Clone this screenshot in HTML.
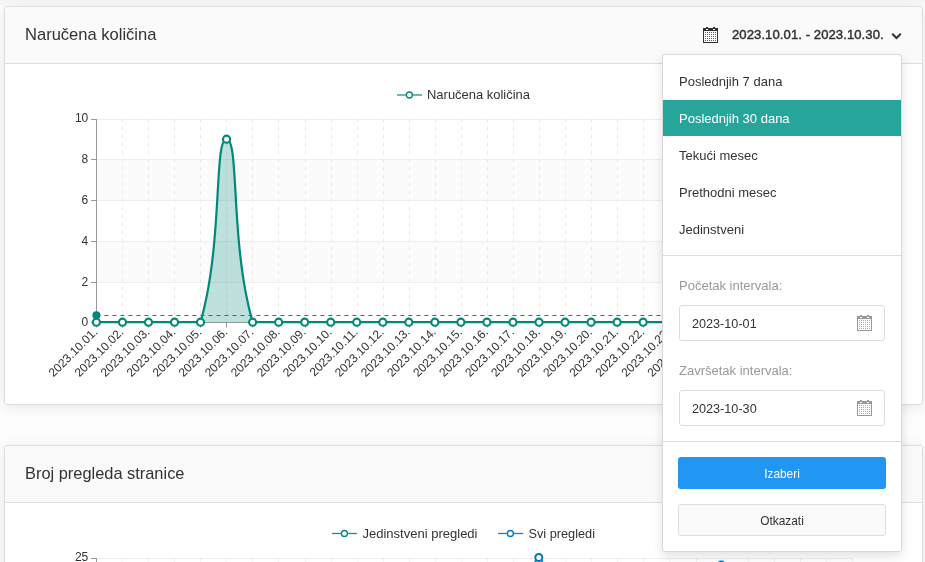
<!DOCTYPE html>
<html>
<head>
<meta charset="utf-8">
<style>
*{box-sizing:border-box;}
html,body{margin:0;padding:0;}
body{width:925px;height:562px;overflow:hidden;background:#fdfdfd;font-family:"Liberation Sans",sans-serif;font-size:13px;color:#333;position:relative;}
.card{position:absolute;left:4px;width:919px;background:#fff;border:1px solid #dddddd;border-radius:3px;box-shadow:0 2px 14px rgba(0,0,0,.09);}
.card-h{position:absolute;left:0;top:0;right:0;height:57px;background:#fafafa;border-bottom:1px solid #dddddd;border-radius:2px 2px 0 0;}
.title{position:absolute;left:20px;top:18px;font-size:16.55px;line-height:20px;color:#333;white-space:nowrap;}
#c1{top:6px;height:399px;}
#c2{top:445px;height:140px;}
svg text{font-family:"Liberation Sans",sans-serif;}
#wrap{position:absolute;left:0;top:0;width:925px;height:562px;will-change:transform;}
.chart{position:absolute;left:0;top:0;pointer-events:none;}
.dd{position:absolute;left:662px;top:54px;width:240px;height:498px;background:#fff;border:1px solid #d9d9d9;border-radius:3px;box-shadow:0 4px 11px rgba(0,0,0,.12);}
.dd > *{margin-top:1px;}
.it{position:absolute;left:0;right:0;height:36px;line-height:38px;padding-left:16px;font-size:13px;color:#333;white-space:nowrap;}
.it.act{background:#26a69a;color:#fff;}
.hr{position:absolute;left:0;right:0;height:1px;background:#dddddd;}
.lbl{position:absolute;left:16px;font-size:13px;color:#999;line-height:20px;white-space:nowrap;}
.inp{position:absolute;left:16px;width:206px;height:36px;border:1px solid #dddddd;border-radius:3px;background:#fff;line-height:36px;padding-left:12px;font-size:12.65px;color:#333;}
.inp .cal{position:absolute;left:177px;top:9px;}
.btn{position:absolute;left:15px;width:208px;height:32px;border-radius:3px;text-align:center;line-height:34px;font-size:11.9px;}
.b1{background:#2196f3;color:#fff;}
.b2{background:#fafafa;border:1px solid #dddddd;color:#333;line-height:32px;}
.range{position:absolute;left:732px;top:27px;font-size:13.1px;font-weight:normal;-webkit-text-stroke:0.45px #333;letter-spacing:0.07px;color:#333;line-height:16px;white-space:nowrap;}
.hcal{position:absolute;left:703px;top:27px;width:16px;height:16px;}
.chev{position:absolute;left:890px;top:31px;}
</style>
</head>
<body>
<div id="wrap">
<div style="position:absolute;left:0;top:0;width:925px;height:8px;background:linear-gradient(rgba(0,0,0,.035),rgba(0,0,0,0));"></div>

<div class="card" id="c1">
  <div class="card-h"><div class="title">Naručena količina</div></div>
</div>
<div class="card" id="c2">
  <div class="card-h"><div class="title" style="font-size:16.4px;top:17px">Broj pregleda stranice</div></div>
</div>

<svg class="chart" width="925" height="562" viewBox="0 0 925 562">
<rect x="96.40" y="159.5" width="755.01" height="41.0" fill="#fbfbfb"/>
<rect x="96.40" y="241.5" width="755.01" height="41.0" fill="#fbfbfb"/>
<line x1="96.40" x2="851.41" y1="119.5" y2="119.5" stroke="#eeeeee" stroke-width="1"/>
<line x1="96.40" x2="851.41" y1="159.5" y2="159.5" stroke="#eeeeee" stroke-width="1"/>
<line x1="96.40" x2="851.41" y1="200.5" y2="200.5" stroke="#eeeeee" stroke-width="1"/>
<line x1="96.40" x2="851.41" y1="241.5" y2="241.5" stroke="#eeeeee" stroke-width="1"/>
<line x1="96.40" x2="851.41" y1="282.5" y2="282.5" stroke="#eeeeee" stroke-width="1"/>
<line x1="122.50" x2="122.50" y1="119.5" y2="322.5" stroke="#ebebeb" stroke-width="1" stroke-dasharray="4 4" stroke-dashoffset="0.6"/>
<line x1="148.50" x2="148.50" y1="119.5" y2="322.5" stroke="#ebebeb" stroke-width="1" stroke-dasharray="4 4" stroke-dashoffset="0.6"/>
<line x1="174.50" x2="174.50" y1="119.5" y2="322.5" stroke="#ebebeb" stroke-width="1" stroke-dasharray="4 4" stroke-dashoffset="0.6"/>
<line x1="200.50" x2="200.50" y1="119.5" y2="322.5" stroke="#ebebeb" stroke-width="1" stroke-dasharray="4 4" stroke-dashoffset="0.6"/>
<line x1="226.50" x2="226.50" y1="119.5" y2="322.5" stroke="#ebebeb" stroke-width="1" stroke-dasharray="4 4" stroke-dashoffset="0.6"/>
<line x1="252.50" x2="252.50" y1="119.5" y2="322.5" stroke="#ebebeb" stroke-width="1" stroke-dasharray="4 4" stroke-dashoffset="0.6"/>
<line x1="278.50" x2="278.50" y1="119.5" y2="322.5" stroke="#ebebeb" stroke-width="1" stroke-dasharray="4 4" stroke-dashoffset="0.6"/>
<line x1="305.50" x2="305.50" y1="119.5" y2="322.5" stroke="#ebebeb" stroke-width="1" stroke-dasharray="4 4" stroke-dashoffset="0.6"/>
<line x1="331.50" x2="331.50" y1="119.5" y2="322.5" stroke="#ebebeb" stroke-width="1" stroke-dasharray="4 4" stroke-dashoffset="0.6"/>
<line x1="357.50" x2="357.50" y1="119.5" y2="322.5" stroke="#ebebeb" stroke-width="1" stroke-dasharray="4 4" stroke-dashoffset="0.6"/>
<line x1="383.50" x2="383.50" y1="119.5" y2="322.5" stroke="#ebebeb" stroke-width="1" stroke-dasharray="4 4" stroke-dashoffset="0.6"/>
<line x1="409.50" x2="409.50" y1="119.5" y2="322.5" stroke="#ebebeb" stroke-width="1" stroke-dasharray="4 4" stroke-dashoffset="0.6"/>
<line x1="435.50" x2="435.50" y1="119.5" y2="322.5" stroke="#ebebeb" stroke-width="1" stroke-dasharray="4 4" stroke-dashoffset="0.6"/>
<line x1="461.50" x2="461.50" y1="119.5" y2="322.5" stroke="#ebebeb" stroke-width="1" stroke-dasharray="4 4" stroke-dashoffset="0.6"/>
<line x1="487.50" x2="487.50" y1="119.5" y2="322.5" stroke="#ebebeb" stroke-width="1" stroke-dasharray="4 4" stroke-dashoffset="0.6"/>
<line x1="513.50" x2="513.50" y1="119.5" y2="322.5" stroke="#ebebeb" stroke-width="1" stroke-dasharray="4 4" stroke-dashoffset="0.6"/>
<line x1="539.50" x2="539.50" y1="119.5" y2="322.5" stroke="#ebebeb" stroke-width="1" stroke-dasharray="4 4" stroke-dashoffset="0.6"/>
<line x1="565.50" x2="565.50" y1="119.5" y2="322.5" stroke="#ebebeb" stroke-width="1" stroke-dasharray="4 4" stroke-dashoffset="0.6"/>
<line x1="591.50" x2="591.50" y1="119.5" y2="322.5" stroke="#ebebeb" stroke-width="1" stroke-dasharray="4 4" stroke-dashoffset="0.6"/>
<line x1="617.50" x2="617.50" y1="119.5" y2="322.5" stroke="#ebebeb" stroke-width="1" stroke-dasharray="4 4" stroke-dashoffset="0.6"/>
<line x1="643.50" x2="643.50" y1="119.5" y2="322.5" stroke="#ebebeb" stroke-width="1" stroke-dasharray="4 4" stroke-dashoffset="0.6"/>
<line x1="669.50" x2="669.50" y1="119.5" y2="322.5" stroke="#ebebeb" stroke-width="1" stroke-dasharray="4 4" stroke-dashoffset="0.6"/>
<line x1="696.50" x2="696.50" y1="119.5" y2="322.5" stroke="#ebebeb" stroke-width="1" stroke-dasharray="4 4" stroke-dashoffset="0.6"/>
<line x1="722.50" x2="722.50" y1="119.5" y2="322.5" stroke="#ebebeb" stroke-width="1" stroke-dasharray="4 4" stroke-dashoffset="0.6"/>
<line x1="748.50" x2="748.50" y1="119.5" y2="322.5" stroke="#ebebeb" stroke-width="1" stroke-dasharray="4 4" stroke-dashoffset="0.6"/>
<line x1="774.50" x2="774.50" y1="119.5" y2="322.5" stroke="#ebebeb" stroke-width="1" stroke-dasharray="4 4" stroke-dashoffset="0.6"/>
<line x1="800.50" x2="800.50" y1="119.5" y2="322.5" stroke="#ebebeb" stroke-width="1" stroke-dasharray="4 4" stroke-dashoffset="0.6"/>
<line x1="826.50" x2="826.50" y1="119.5" y2="322.5" stroke="#ebebeb" stroke-width="1" stroke-dasharray="4 4" stroke-dashoffset="0.6"/>
<line x1="852.50" x2="852.50" y1="119.5" y2="322.5" stroke="#ebebeb" stroke-width="1" stroke-dasharray="4 4" stroke-dashoffset="0.6"/>
<line x1="96.50" x2="96.50" y1="119" y2="323" stroke="#999" stroke-width="1"/>
<line x1="91.00" x2="96.00" y1="119.5" y2="119.5" stroke="#999" stroke-width="1"/>
<text x="88.30" y="118.3" text-anchor="end" font-size="12" fill="#333" dy="3.8">10</text>
<line x1="91.00" x2="96.00" y1="159.5" y2="159.5" stroke="#999" stroke-width="1"/>
<text x="88.30" y="158.9" text-anchor="end" font-size="12" fill="#333" dy="3.8">8</text>
<line x1="91.00" x2="96.00" y1="200.5" y2="200.5" stroke="#999" stroke-width="1"/>
<text x="88.30" y="199.9" text-anchor="end" font-size="12" fill="#333" dy="3.8">6</text>
<line x1="91.00" x2="96.00" y1="241.5" y2="241.5" stroke="#999" stroke-width="1"/>
<text x="88.30" y="240.9" text-anchor="end" font-size="12" fill="#333" dy="3.8">4</text>
<line x1="91.00" x2="96.00" y1="282.5" y2="282.5" stroke="#999" stroke-width="1"/>
<text x="88.30" y="281.9" text-anchor="end" font-size="12" fill="#333" dy="3.8">2</text>
<line x1="91.00" x2="96.00" y1="322.5" y2="322.5" stroke="#999" stroke-width="1"/>
<text x="88.30" y="321.9" text-anchor="end" font-size="12" fill="#333" dy="3.8">0</text>
<line x1="96.40" x2="851.41" y1="322.5" y2="322.5" stroke="#999" stroke-width="1"/>
<line x1="96.50" x2="96.50" y1="322.5" y2="327.5" stroke="#999" stroke-width="1"/>
<line x1="122.50" x2="122.50" y1="322.5" y2="327.5" stroke="#999" stroke-width="1"/>
<line x1="148.50" x2="148.50" y1="322.5" y2="327.5" stroke="#999" stroke-width="1"/>
<line x1="174.50" x2="174.50" y1="322.5" y2="327.5" stroke="#999" stroke-width="1"/>
<line x1="200.50" x2="200.50" y1="322.5" y2="327.5" stroke="#999" stroke-width="1"/>
<line x1="226.50" x2="226.50" y1="322.5" y2="327.5" stroke="#999" stroke-width="1"/>
<line x1="252.50" x2="252.50" y1="322.5" y2="327.5" stroke="#999" stroke-width="1"/>
<line x1="278.50" x2="278.50" y1="322.5" y2="327.5" stroke="#999" stroke-width="1"/>
<line x1="305.50" x2="305.50" y1="322.5" y2="327.5" stroke="#999" stroke-width="1"/>
<line x1="331.50" x2="331.50" y1="322.5" y2="327.5" stroke="#999" stroke-width="1"/>
<line x1="357.50" x2="357.50" y1="322.5" y2="327.5" stroke="#999" stroke-width="1"/>
<line x1="383.50" x2="383.50" y1="322.5" y2="327.5" stroke="#999" stroke-width="1"/>
<line x1="409.50" x2="409.50" y1="322.5" y2="327.5" stroke="#999" stroke-width="1"/>
<line x1="435.50" x2="435.50" y1="322.5" y2="327.5" stroke="#999" stroke-width="1"/>
<line x1="461.50" x2="461.50" y1="322.5" y2="327.5" stroke="#999" stroke-width="1"/>
<line x1="487.50" x2="487.50" y1="322.5" y2="327.5" stroke="#999" stroke-width="1"/>
<line x1="513.50" x2="513.50" y1="322.5" y2="327.5" stroke="#999" stroke-width="1"/>
<line x1="539.50" x2="539.50" y1="322.5" y2="327.5" stroke="#999" stroke-width="1"/>
<line x1="565.50" x2="565.50" y1="322.5" y2="327.5" stroke="#999" stroke-width="1"/>
<line x1="591.50" x2="591.50" y1="322.5" y2="327.5" stroke="#999" stroke-width="1"/>
<line x1="617.50" x2="617.50" y1="322.5" y2="327.5" stroke="#999" stroke-width="1"/>
<line x1="643.50" x2="643.50" y1="322.5" y2="327.5" stroke="#999" stroke-width="1"/>
<line x1="669.50" x2="669.50" y1="322.5" y2="327.5" stroke="#999" stroke-width="1"/>
<line x1="696.50" x2="696.50" y1="322.5" y2="327.5" stroke="#999" stroke-width="1"/>
<line x1="722.50" x2="722.50" y1="322.5" y2="327.5" stroke="#999" stroke-width="1"/>
<line x1="748.50" x2="748.50" y1="322.5" y2="327.5" stroke="#999" stroke-width="1"/>
<line x1="774.50" x2="774.50" y1="322.5" y2="327.5" stroke="#999" stroke-width="1"/>
<line x1="800.50" x2="800.50" y1="322.5" y2="327.5" stroke="#999" stroke-width="1"/>
<line x1="826.50" x2="826.50" y1="322.5" y2="327.5" stroke="#999" stroke-width="1"/>
<line x1="852.50" x2="852.50" y1="322.5" y2="327.5" stroke="#999" stroke-width="1"/>
<text transform="translate(95.30 329.8) rotate(-45)" text-anchor="end" font-size="12" fill="#333" dy="4.2">2023.10.01.</text>
<text transform="translate(121.34 329.8) rotate(-45)" text-anchor="end" font-size="12" fill="#333" dy="4.2">2023.10.02.</text>
<text transform="translate(147.37 329.8) rotate(-45)" text-anchor="end" font-size="12" fill="#333" dy="4.2">2023.10.03.</text>
<text transform="translate(173.41 329.8) rotate(-45)" text-anchor="end" font-size="12" fill="#333" dy="4.2">2023.10.04.</text>
<text transform="translate(199.44 329.8) rotate(-45)" text-anchor="end" font-size="12" fill="#333" dy="4.2">2023.10.05.</text>
<text transform="translate(225.48 329.8) rotate(-45)" text-anchor="end" font-size="12" fill="#333" dy="4.2">2023.10.06.</text>
<text transform="translate(251.51 329.8) rotate(-45)" text-anchor="end" font-size="12" fill="#333" dy="4.2">2023.10.07.</text>
<text transform="translate(277.54 329.8) rotate(-45)" text-anchor="end" font-size="12" fill="#333" dy="4.2">2023.10.08.</text>
<text transform="translate(303.58 329.8) rotate(-45)" text-anchor="end" font-size="12" fill="#333" dy="4.2">2023.10.09.</text>
<text transform="translate(329.62 329.8) rotate(-45)" text-anchor="end" font-size="12" fill="#333" dy="4.2">2023.10.10.</text>
<text transform="translate(355.65 329.8) rotate(-45)" text-anchor="end" font-size="12" fill="#333" dy="4.2">2023.10.11.</text>
<text transform="translate(381.68 329.8) rotate(-45)" text-anchor="end" font-size="12" fill="#333" dy="4.2">2023.10.12.</text>
<text transform="translate(407.72 329.8) rotate(-45)" text-anchor="end" font-size="12" fill="#333" dy="4.2">2023.10.13.</text>
<text transform="translate(433.75 329.8) rotate(-45)" text-anchor="end" font-size="12" fill="#333" dy="4.2">2023.10.14.</text>
<text transform="translate(459.79 329.8) rotate(-45)" text-anchor="end" font-size="12" fill="#333" dy="4.2">2023.10.15.</text>
<text transform="translate(485.82 329.8) rotate(-45)" text-anchor="end" font-size="12" fill="#333" dy="4.2">2023.10.16.</text>
<text transform="translate(511.86 329.8) rotate(-45)" text-anchor="end" font-size="12" fill="#333" dy="4.2">2023.10.17.</text>
<text transform="translate(537.89 329.8) rotate(-45)" text-anchor="end" font-size="12" fill="#333" dy="4.2">2023.10.18.</text>
<text transform="translate(563.93 329.8) rotate(-45)" text-anchor="end" font-size="12" fill="#333" dy="4.2">2023.10.19.</text>
<text transform="translate(589.97 329.8) rotate(-45)" text-anchor="end" font-size="12" fill="#333" dy="4.2">2023.10.20.</text>
<text transform="translate(616.00 329.8) rotate(-45)" text-anchor="end" font-size="12" fill="#333" dy="4.2">2023.10.21.</text>
<text transform="translate(642.03 329.8) rotate(-45)" text-anchor="end" font-size="12" fill="#333" dy="4.2">2023.10.22.</text>
<text transform="translate(668.07 329.8) rotate(-45)" text-anchor="end" font-size="12" fill="#333" dy="4.2">2023.10.23.</text>
<text transform="translate(694.10 329.8) rotate(-45)" text-anchor="end" font-size="12" fill="#333" dy="4.2">2023.10.24.</text>
<text transform="translate(720.14 329.8) rotate(-45)" text-anchor="end" font-size="12" fill="#333" dy="4.2">2023.10.25.</text>
<text transform="translate(746.17 329.8) rotate(-45)" text-anchor="end" font-size="12" fill="#333" dy="4.2">2023.10.26.</text>
<text transform="translate(772.21 329.8) rotate(-45)" text-anchor="end" font-size="12" fill="#333" dy="4.2">2023.10.27.</text>
<text transform="translate(798.25 329.8) rotate(-45)" text-anchor="end" font-size="12" fill="#333" dy="4.2">2023.10.28.</text>
<text transform="translate(824.28 329.8) rotate(-45)" text-anchor="end" font-size="12" fill="#333" dy="4.2">2023.10.29.</text>
<text transform="translate(850.31 329.8) rotate(-45)" text-anchor="end" font-size="12" fill="#333" dy="4.2">2023.10.30.</text>
<path d="M96.40 322.20 C96.40 322.20 109.42 322.20 122.44 322.20 C135.45 322.20 135.45 322.20 148.47 322.20 C161.49 322.20 161.49 322.20 174.50 322.20 C187.52 322.20 197.33 322.20 200.54 322.20 C223.36 242.00 213.56 139.20 226.58 139.20 C239.59 139.20 229.79 242.00 252.61 322.20 C255.82 322.20 265.63 322.20 278.64 322.20 C291.66 322.20 291.66 322.20 304.68 322.20 C317.70 322.20 317.70 322.20 330.72 322.20 C343.73 322.20 343.73 322.20 356.75 322.20 C369.77 322.20 369.77 322.20 382.78 322.20 C395.80 322.20 395.80 322.20 408.82 322.20 C421.84 322.20 421.84 322.20 434.86 322.20 C447.87 322.20 447.87 322.20 460.89 322.20 C473.91 322.20 473.91 322.20 486.92 322.20 C499.94 322.20 499.94 322.20 512.96 322.20 C525.98 322.20 525.98 322.20 539.00 322.20 C552.01 322.20 552.01 322.20 565.03 322.20 C578.05 322.20 578.05 322.20 591.07 322.20 C604.08 322.20 604.08 322.20 617.10 322.20 C630.12 322.20 630.12 322.20 643.13 322.20 C656.15 322.20 656.15 322.20 669.17 322.20 C682.19 322.20 682.19 322.20 695.20 322.20 C708.22 322.20 708.22 322.20 721.24 322.20 C734.26 322.20 734.26 322.20 747.27 322.20 C760.29 322.20 760.29 322.20 773.31 322.20 C786.33 322.20 786.33 322.20 799.35 322.20 C812.36 322.20 812.36 322.20 825.38 322.20 C838.40 322.20 851.41 322.20 851.41 322.20 L851.41 322.2 L96.40 322.2 Z" fill="#00897b" fill-opacity="0.25"/>
<path d="M96.40 322.20 C96.40 322.20 109.42 322.20 122.44 322.20 C135.45 322.20 135.45 322.20 148.47 322.20 C161.49 322.20 161.49 322.20 174.50 322.20 C187.52 322.20 197.33 322.20 200.54 322.20 C223.36 242.00 213.56 139.20 226.58 139.20 C239.59 139.20 229.79 242.00 252.61 322.20 C255.82 322.20 265.63 322.20 278.64 322.20 C291.66 322.20 291.66 322.20 304.68 322.20 C317.70 322.20 317.70 322.20 330.72 322.20 C343.73 322.20 343.73 322.20 356.75 322.20 C369.77 322.20 369.77 322.20 382.78 322.20 C395.80 322.20 395.80 322.20 408.82 322.20 C421.84 322.20 421.84 322.20 434.86 322.20 C447.87 322.20 447.87 322.20 460.89 322.20 C473.91 322.20 473.91 322.20 486.92 322.20 C499.94 322.20 499.94 322.20 512.96 322.20 C525.98 322.20 525.98 322.20 539.00 322.20 C552.01 322.20 552.01 322.20 565.03 322.20 C578.05 322.20 578.05 322.20 591.07 322.20 C604.08 322.20 604.08 322.20 617.10 322.20 C630.12 322.20 630.12 322.20 643.13 322.20 C656.15 322.20 656.15 322.20 669.17 322.20 C682.19 322.20 682.19 322.20 695.20 322.20 C708.22 322.20 708.22 322.20 721.24 322.20 C734.26 322.20 734.26 322.20 747.27 322.20 C760.29 322.20 760.29 322.20 773.31 322.20 C786.33 322.20 786.33 322.20 799.35 322.20 C812.36 322.20 812.36 322.20 825.38 322.20 C838.40 322.20 851.41 322.20 851.41 322.20" fill="none" stroke="#00897b" stroke-width="2.2" stroke-linejoin="round"/>
<line x1="96.40" x2="851.41" y1="315.5" y2="315.5" stroke="#00897b" stroke-width="1.2" stroke-dasharray="4 4"/>
<circle cx="96.40" cy="315.2" r="4" fill="#00897b"/>
<circle cx="96.40" cy="322.20" r="3.55" fill="#fff" stroke="#00897b" stroke-width="2.1"/>
<circle cx="122.44" cy="322.20" r="3.55" fill="#fff" stroke="#00897b" stroke-width="2.1"/>
<circle cx="148.47" cy="322.20" r="3.55" fill="#fff" stroke="#00897b" stroke-width="2.1"/>
<circle cx="174.50" cy="322.20" r="3.55" fill="#fff" stroke="#00897b" stroke-width="2.1"/>
<circle cx="200.54" cy="322.20" r="3.55" fill="#fff" stroke="#00897b" stroke-width="2.1"/>
<circle cx="226.58" cy="139.20" r="3.55" fill="#fff" stroke="#00897b" stroke-width="2.1"/>
<circle cx="252.61" cy="322.20" r="3.55" fill="#fff" stroke="#00897b" stroke-width="2.1"/>
<circle cx="278.64" cy="322.20" r="3.55" fill="#fff" stroke="#00897b" stroke-width="2.1"/>
<circle cx="304.68" cy="322.20" r="3.55" fill="#fff" stroke="#00897b" stroke-width="2.1"/>
<circle cx="330.72" cy="322.20" r="3.55" fill="#fff" stroke="#00897b" stroke-width="2.1"/>
<circle cx="356.75" cy="322.20" r="3.55" fill="#fff" stroke="#00897b" stroke-width="2.1"/>
<circle cx="382.78" cy="322.20" r="3.55" fill="#fff" stroke="#00897b" stroke-width="2.1"/>
<circle cx="408.82" cy="322.20" r="3.55" fill="#fff" stroke="#00897b" stroke-width="2.1"/>
<circle cx="434.86" cy="322.20" r="3.55" fill="#fff" stroke="#00897b" stroke-width="2.1"/>
<circle cx="460.89" cy="322.20" r="3.55" fill="#fff" stroke="#00897b" stroke-width="2.1"/>
<circle cx="486.92" cy="322.20" r="3.55" fill="#fff" stroke="#00897b" stroke-width="2.1"/>
<circle cx="512.96" cy="322.20" r="3.55" fill="#fff" stroke="#00897b" stroke-width="2.1"/>
<circle cx="539.00" cy="322.20" r="3.55" fill="#fff" stroke="#00897b" stroke-width="2.1"/>
<circle cx="565.03" cy="322.20" r="3.55" fill="#fff" stroke="#00897b" stroke-width="2.1"/>
<circle cx="591.07" cy="322.20" r="3.55" fill="#fff" stroke="#00897b" stroke-width="2.1"/>
<circle cx="617.10" cy="322.20" r="3.55" fill="#fff" stroke="#00897b" stroke-width="2.1"/>
<circle cx="643.13" cy="322.20" r="3.55" fill="#fff" stroke="#00897b" stroke-width="2.1"/>
<circle cx="669.17" cy="322.20" r="3.55" fill="#fff" stroke="#00897b" stroke-width="2.1"/>
<circle cx="695.20" cy="322.20" r="3.55" fill="#fff" stroke="#00897b" stroke-width="2.1"/>
<circle cx="721.24" cy="322.20" r="3.55" fill="#fff" stroke="#00897b" stroke-width="2.1"/>
<circle cx="747.27" cy="322.20" r="3.55" fill="#fff" stroke="#00897b" stroke-width="2.1"/>
<circle cx="773.31" cy="322.20" r="3.55" fill="#fff" stroke="#00897b" stroke-width="2.1"/>
<circle cx="799.35" cy="322.20" r="3.55" fill="#fff" stroke="#00897b" stroke-width="2.1"/>
<circle cx="825.38" cy="322.20" r="3.55" fill="#fff" stroke="#00897b" stroke-width="2.1"/>
<circle cx="851.41" cy="322.20" r="3.55" fill="#fff" stroke="#00897b" stroke-width="2.1"/>
<line x1="397" x2="422" y1="95" y2="95" stroke="#00897b" stroke-width="1.3" stroke-opacity="0.9"/>
<circle cx="409.4" cy="95" r="3" fill="#fff" stroke="#00897b" stroke-width="1.3"/>
<text x="427" y="95" font-size="13" fill="#333" dy="4.4" textLength="103" lengthAdjust="spacingAndGlyphs">Naručena količina</text>
<line x1="96.40" x2="852.50" y1="558.5" y2="558.5" stroke="#eeeeee" stroke-width="1"/>
<line x1="122.50" x2="122.50" y1="558.0" y2="600" stroke="#ebebeb" stroke-width="1" stroke-dasharray="4 4" stroke-dashoffset="0.6"/>
<line x1="148.50" x2="148.50" y1="558.0" y2="600" stroke="#ebebeb" stroke-width="1" stroke-dasharray="4 4" stroke-dashoffset="0.6"/>
<line x1="174.50" x2="174.50" y1="558.0" y2="600" stroke="#ebebeb" stroke-width="1" stroke-dasharray="4 4" stroke-dashoffset="0.6"/>
<line x1="200.50" x2="200.50" y1="558.0" y2="600" stroke="#ebebeb" stroke-width="1" stroke-dasharray="4 4" stroke-dashoffset="0.6"/>
<line x1="226.50" x2="226.50" y1="558.0" y2="600" stroke="#ebebeb" stroke-width="1" stroke-dasharray="4 4" stroke-dashoffset="0.6"/>
<line x1="252.50" x2="252.50" y1="558.0" y2="600" stroke="#ebebeb" stroke-width="1" stroke-dasharray="4 4" stroke-dashoffset="0.6"/>
<line x1="278.50" x2="278.50" y1="558.0" y2="600" stroke="#ebebeb" stroke-width="1" stroke-dasharray="4 4" stroke-dashoffset="0.6"/>
<line x1="305.50" x2="305.50" y1="558.0" y2="600" stroke="#ebebeb" stroke-width="1" stroke-dasharray="4 4" stroke-dashoffset="0.6"/>
<line x1="331.50" x2="331.50" y1="558.0" y2="600" stroke="#ebebeb" stroke-width="1" stroke-dasharray="4 4" stroke-dashoffset="0.6"/>
<line x1="357.50" x2="357.50" y1="558.0" y2="600" stroke="#ebebeb" stroke-width="1" stroke-dasharray="4 4" stroke-dashoffset="0.6"/>
<line x1="383.50" x2="383.50" y1="558.0" y2="600" stroke="#ebebeb" stroke-width="1" stroke-dasharray="4 4" stroke-dashoffset="0.6"/>
<line x1="409.50" x2="409.50" y1="558.0" y2="600" stroke="#ebebeb" stroke-width="1" stroke-dasharray="4 4" stroke-dashoffset="0.6"/>
<line x1="435.50" x2="435.50" y1="558.0" y2="600" stroke="#ebebeb" stroke-width="1" stroke-dasharray="4 4" stroke-dashoffset="0.6"/>
<line x1="461.50" x2="461.50" y1="558.0" y2="600" stroke="#ebebeb" stroke-width="1" stroke-dasharray="4 4" stroke-dashoffset="0.6"/>
<line x1="487.50" x2="487.50" y1="558.0" y2="600" stroke="#ebebeb" stroke-width="1" stroke-dasharray="4 4" stroke-dashoffset="0.6"/>
<line x1="513.50" x2="513.50" y1="558.0" y2="600" stroke="#ebebeb" stroke-width="1" stroke-dasharray="4 4" stroke-dashoffset="0.6"/>
<line x1="539.50" x2="539.50" y1="558.0" y2="600" stroke="#ebebeb" stroke-width="1" stroke-dasharray="4 4" stroke-dashoffset="0.6"/>
<line x1="565.50" x2="565.50" y1="558.0" y2="600" stroke="#ebebeb" stroke-width="1" stroke-dasharray="4 4" stroke-dashoffset="0.6"/>
<line x1="591.50" x2="591.50" y1="558.0" y2="600" stroke="#ebebeb" stroke-width="1" stroke-dasharray="4 4" stroke-dashoffset="0.6"/>
<line x1="617.50" x2="617.50" y1="558.0" y2="600" stroke="#ebebeb" stroke-width="1" stroke-dasharray="4 4" stroke-dashoffset="0.6"/>
<line x1="643.50" x2="643.50" y1="558.0" y2="600" stroke="#ebebeb" stroke-width="1" stroke-dasharray="4 4" stroke-dashoffset="0.6"/>
<line x1="669.50" x2="669.50" y1="558.0" y2="600" stroke="#ebebeb" stroke-width="1" stroke-dasharray="4 4" stroke-dashoffset="0.6"/>
<line x1="696.50" x2="696.50" y1="558.0" y2="600" stroke="#ebebeb" stroke-width="1" stroke-dasharray="4 4" stroke-dashoffset="0.6"/>
<line x1="722.50" x2="722.50" y1="558.0" y2="600" stroke="#ebebeb" stroke-width="1" stroke-dasharray="4 4" stroke-dashoffset="0.6"/>
<line x1="748.50" x2="748.50" y1="558.0" y2="600" stroke="#ebebeb" stroke-width="1" stroke-dasharray="4 4" stroke-dashoffset="0.6"/>
<line x1="774.50" x2="774.50" y1="558.0" y2="600" stroke="#ebebeb" stroke-width="1" stroke-dasharray="4 4" stroke-dashoffset="0.6"/>
<line x1="800.50" x2="800.50" y1="558.0" y2="600" stroke="#ebebeb" stroke-width="1" stroke-dasharray="4 4" stroke-dashoffset="0.6"/>
<line x1="826.50" x2="826.50" y1="558.0" y2="600" stroke="#ebebeb" stroke-width="1" stroke-dasharray="4 4" stroke-dashoffset="0.6"/>
<line x1="852.50" x2="852.50" y1="558.0" y2="600" stroke="#ebebeb" stroke-width="1" stroke-dasharray="4 4" stroke-dashoffset="0.6"/>
<line x1="96.50" x2="96.50" y1="558.0" y2="600" stroke="#999" stroke-width="1"/>
<line x1="91.00" x2="96.00" y1="558.5" y2="558.5" stroke="#999" stroke-width="1"/>
<text x="88.30" y="557.3" text-anchor="end" font-size="12" fill="#333" dy="3.8">25</text>
<path d="M512.96 760 C534.96 680 525.80 557.4 538.80 557.4 C551.80 557.4 543.03 680 565.03 760 Z" fill="#0277bd" fill-opacity="0.25"/>
<path d="M512.96 760 C534.96 680 525.80 557.4 538.80 557.4 C551.80 557.4 543.03 680 565.03 760" fill="none" stroke="#0277bd" stroke-width="2"/>
<circle cx="538.80" cy="557.4" r="3.5" fill="#fff" stroke="#0277bd" stroke-width="2"/>
<circle cx="721.24" cy="565" r="3.5" fill="#fff" stroke="#0277bd" stroke-width="2"/>
<line x1="332" x2="357" y1="533.5" y2="533.5" stroke="#00897b" stroke-width="1.3" stroke-opacity="0.9"/>
<circle cx="344.4" cy="533.5" r="3" fill="#fff" stroke="#00897b" stroke-width="1.3"/>
<text x="362.5" y="533.5" font-size="13" fill="#333" dy="4.4" textLength="115" lengthAdjust="spacingAndGlyphs">Jedinstveni pregledi</text>
<line x1="498" x2="523" y1="533.5" y2="533.5" stroke="#0277bd" stroke-width="1.3" stroke-opacity="0.9"/>
<circle cx="510.4" cy="533.5" r="3" fill="#fff" stroke="#0277bd" stroke-width="1.3"/>
<text x="528.5" y="533.5" font-size="13" fill="#333" dy="4.4" textLength="66.5" lengthAdjust="spacingAndGlyphs">Svi pregledi</text>
</svg>

<div class="hcal"><svg class="cal" width="16" height="16" viewBox="0 0 16 16" shape-rendering="crispEdges"><path d="M0 1h15v15h-15z" fill="#333"/><rect x="1" y="4" width="13" height="11" fill="#fff"/><rect x="3" y="0" width="2" height="1" fill="#333"/><rect x="10" y="0" width="2" height="1" fill="#333"/><rect x="3" y="2" width="2" height="1" fill="#fff"/><rect x="10" y="2" width="2" height="1" fill="#fff"/><rect x="2" y="5" width="1" height="1" fill="#333" fill-opacity="0.8"/><rect x="4" y="5" width="1" height="1" fill="#333" fill-opacity="0.8"/><rect x="6" y="5" width="1" height="1" fill="#333" fill-opacity="0.8"/><rect x="8" y="5" width="1" height="1" fill="#333" fill-opacity="0.8"/><rect x="10" y="5" width="1" height="1" fill="#333" fill-opacity="0.8"/><rect x="12" y="5" width="1" height="1" fill="#333" fill-opacity="0.8"/><rect x="2" y="7" width="1" height="1" fill="#333" fill-opacity="0.8"/><rect x="4" y="7" width="1" height="1" fill="#333" fill-opacity="0.8"/><rect x="6" y="7" width="1" height="1" fill="#333" fill-opacity="0.8"/><rect x="8" y="7" width="1" height="1" fill="#333" fill-opacity="0.8"/><rect x="10" y="7" width="1" height="1" fill="#333" fill-opacity="0.8"/><rect x="12" y="7" width="1" height="1" fill="#333" fill-opacity="0.8"/><rect x="2" y="9" width="1" height="1" fill="#333" fill-opacity="0.8"/><rect x="4" y="9" width="1" height="1" fill="#333" fill-opacity="0.8"/><rect x="6" y="9" width="1" height="1" fill="#333" fill-opacity="0.8"/><rect x="8" y="9" width="1" height="1" fill="#333" fill-opacity="0.8"/><rect x="10" y="9" width="1" height="1" fill="#333" fill-opacity="0.8"/><rect x="12" y="9" width="1" height="1" fill="#333" fill-opacity="0.8"/><rect x="2" y="11" width="1" height="1" fill="#333" fill-opacity="0.8"/><rect x="4" y="11" width="1" height="1" fill="#333" fill-opacity="0.8"/><rect x="6" y="11" width="1" height="1" fill="#333" fill-opacity="0.8"/><rect x="8" y="11" width="1" height="1" fill="#333" fill-opacity="0.8"/><rect x="10" y="11" width="1" height="1" fill="#333" fill-opacity="0.8"/><rect x="12" y="11" width="1" height="1" fill="#333" fill-opacity="0.8"/><rect x="2" y="13" width="1" height="1" fill="#333" fill-opacity="0.8"/><rect x="4" y="13" width="1" height="1" fill="#333" fill-opacity="0.8"/><rect x="6" y="13" width="1" height="1" fill="#333" fill-opacity="0.8"/><rect x="8" y="13" width="1" height="1" fill="#333" fill-opacity="0.8"/><rect x="10" y="13" width="1" height="1" fill="#333" fill-opacity="0.8"/><rect x="12" y="13" width="1" height="1" fill="#333" fill-opacity="0.8"/></svg></div>
<div class="range">2023.10.01. - 2023.10.30.</div>
<svg class="chev" width="13" height="10" viewBox="0 0 13 10"><path d="M2.2 2.8 L6.5 7 L10.8 2.8" fill="none" stroke="#333" stroke-width="2"/></svg>

<div class="dd">
  <div class="it" style="top:7px">Poslednjih 7 dana</div>
  <div class="it act" style="top:44px">Poslednjih 30 dana</div>
  <div class="it" style="top:81px">Tekući mesec</div>
  <div class="it" style="top:118px">Prethodni mesec</div>
  <div class="it" style="top:155px">Jedinstveni</div>
  <div class="hr" style="top:199px"></div>
  <div class="lbl" style="top:220px">Početak intervala:</div>
  <div class="inp" style="top:249px">2023-10-01<svg class="cal" width="16" height="16" viewBox="0 0 16 16" shape-rendering="crispEdges"><path d="M0 1h15v15h-15z" fill="#999"/><rect x="1" y="4" width="13" height="11" fill="#fff"/><rect x="3" y="0" width="2" height="1" fill="#999"/><rect x="10" y="0" width="2" height="1" fill="#999"/><rect x="3" y="2" width="2" height="1" fill="#fff"/><rect x="10" y="2" width="2" height="1" fill="#fff"/><rect x="2" y="5" width="1" height="1" fill="#999" fill-opacity="0.8"/><rect x="4" y="5" width="1" height="1" fill="#999" fill-opacity="0.8"/><rect x="6" y="5" width="1" height="1" fill="#999" fill-opacity="0.8"/><rect x="8" y="5" width="1" height="1" fill="#999" fill-opacity="0.8"/><rect x="10" y="5" width="1" height="1" fill="#999" fill-opacity="0.8"/><rect x="12" y="5" width="1" height="1" fill="#999" fill-opacity="0.8"/><rect x="2" y="7" width="1" height="1" fill="#999" fill-opacity="0.8"/><rect x="4" y="7" width="1" height="1" fill="#999" fill-opacity="0.8"/><rect x="6" y="7" width="1" height="1" fill="#999" fill-opacity="0.8"/><rect x="8" y="7" width="1" height="1" fill="#999" fill-opacity="0.8"/><rect x="10" y="7" width="1" height="1" fill="#999" fill-opacity="0.8"/><rect x="12" y="7" width="1" height="1" fill="#999" fill-opacity="0.8"/><rect x="2" y="9" width="1" height="1" fill="#999" fill-opacity="0.8"/><rect x="4" y="9" width="1" height="1" fill="#999" fill-opacity="0.8"/><rect x="6" y="9" width="1" height="1" fill="#999" fill-opacity="0.8"/><rect x="8" y="9" width="1" height="1" fill="#999" fill-opacity="0.8"/><rect x="10" y="9" width="1" height="1" fill="#999" fill-opacity="0.8"/><rect x="12" y="9" width="1" height="1" fill="#999" fill-opacity="0.8"/><rect x="2" y="11" width="1" height="1" fill="#999" fill-opacity="0.8"/><rect x="4" y="11" width="1" height="1" fill="#999" fill-opacity="0.8"/><rect x="6" y="11" width="1" height="1" fill="#999" fill-opacity="0.8"/><rect x="8" y="11" width="1" height="1" fill="#999" fill-opacity="0.8"/><rect x="10" y="11" width="1" height="1" fill="#999" fill-opacity="0.8"/><rect x="12" y="11" width="1" height="1" fill="#999" fill-opacity="0.8"/><rect x="2" y="13" width="1" height="1" fill="#999" fill-opacity="0.8"/><rect x="4" y="13" width="1" height="1" fill="#999" fill-opacity="0.8"/><rect x="6" y="13" width="1" height="1" fill="#999" fill-opacity="0.8"/><rect x="8" y="13" width="1" height="1" fill="#999" fill-opacity="0.8"/><rect x="10" y="13" width="1" height="1" fill="#999" fill-opacity="0.8"/><rect x="12" y="13" width="1" height="1" fill="#999" fill-opacity="0.8"/></svg></div>
  <div class="lbl" style="top:305px">Završetak intervala:</div>
  <div class="inp" style="top:334px">2023-10-30<svg class="cal" width="16" height="16" viewBox="0 0 16 16" shape-rendering="crispEdges"><path d="M0 1h15v15h-15z" fill="#999"/><rect x="1" y="4" width="13" height="11" fill="#fff"/><rect x="3" y="0" width="2" height="1" fill="#999"/><rect x="10" y="0" width="2" height="1" fill="#999"/><rect x="3" y="2" width="2" height="1" fill="#fff"/><rect x="10" y="2" width="2" height="1" fill="#fff"/><rect x="2" y="5" width="1" height="1" fill="#999" fill-opacity="0.8"/><rect x="4" y="5" width="1" height="1" fill="#999" fill-opacity="0.8"/><rect x="6" y="5" width="1" height="1" fill="#999" fill-opacity="0.8"/><rect x="8" y="5" width="1" height="1" fill="#999" fill-opacity="0.8"/><rect x="10" y="5" width="1" height="1" fill="#999" fill-opacity="0.8"/><rect x="12" y="5" width="1" height="1" fill="#999" fill-opacity="0.8"/><rect x="2" y="7" width="1" height="1" fill="#999" fill-opacity="0.8"/><rect x="4" y="7" width="1" height="1" fill="#999" fill-opacity="0.8"/><rect x="6" y="7" width="1" height="1" fill="#999" fill-opacity="0.8"/><rect x="8" y="7" width="1" height="1" fill="#999" fill-opacity="0.8"/><rect x="10" y="7" width="1" height="1" fill="#999" fill-opacity="0.8"/><rect x="12" y="7" width="1" height="1" fill="#999" fill-opacity="0.8"/><rect x="2" y="9" width="1" height="1" fill="#999" fill-opacity="0.8"/><rect x="4" y="9" width="1" height="1" fill="#999" fill-opacity="0.8"/><rect x="6" y="9" width="1" height="1" fill="#999" fill-opacity="0.8"/><rect x="8" y="9" width="1" height="1" fill="#999" fill-opacity="0.8"/><rect x="10" y="9" width="1" height="1" fill="#999" fill-opacity="0.8"/><rect x="12" y="9" width="1" height="1" fill="#999" fill-opacity="0.8"/><rect x="2" y="11" width="1" height="1" fill="#999" fill-opacity="0.8"/><rect x="4" y="11" width="1" height="1" fill="#999" fill-opacity="0.8"/><rect x="6" y="11" width="1" height="1" fill="#999" fill-opacity="0.8"/><rect x="8" y="11" width="1" height="1" fill="#999" fill-opacity="0.8"/><rect x="10" y="11" width="1" height="1" fill="#999" fill-opacity="0.8"/><rect x="12" y="11" width="1" height="1" fill="#999" fill-opacity="0.8"/><rect x="2" y="13" width="1" height="1" fill="#999" fill-opacity="0.8"/><rect x="4" y="13" width="1" height="1" fill="#999" fill-opacity="0.8"/><rect x="6" y="13" width="1" height="1" fill="#999" fill-opacity="0.8"/><rect x="8" y="13" width="1" height="1" fill="#999" fill-opacity="0.8"/><rect x="10" y="13" width="1" height="1" fill="#999" fill-opacity="0.8"/><rect x="12" y="13" width="1" height="1" fill="#999" fill-opacity="0.8"/></svg></div>
  <div class="hr" style="top:385px"></div>
  <div class="btn b1" style="top:401px">Izaberi</div>
  <div class="btn b2" style="top:448px">Otkazati</div>
</div>

</div>
</body>
</html>
